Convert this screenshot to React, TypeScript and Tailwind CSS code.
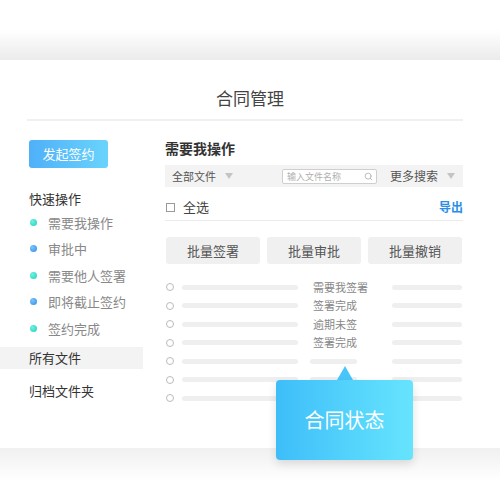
import { Search } from "lucide-react"

const quick = [
  { label: "需要我操作", color: "bg-[radial-gradient(circle_at_35%_35%,#6ff0e2,#21cfbd)]" },
  { label: "审批中", color: "bg-[radial-gradient(circle_at_35%_35%,#7cc3fa,#2f8ee8)]" },
  { label: "需要他人签署", color: "bg-[radial-gradient(circle_at_35%_35%,#6ff0e2,#21cfbd)]" },
  { label: "即将截止签约", color: "bg-[radial-gradient(circle_at_35%_35%,#7cc3fa,#2f8ee8)]" },
  { label: "签约完成", color: "bg-[radial-gradient(circle_at_35%_35%,#6ff0e2,#21cfbd)]" },
]

const rows = ["需要我签署", "签署完成", "逾期未签", "签署完成", "", "", ""]

function Caret() {
  return <span className="ml-[9px] inline-block w-0 h-0 border-l-[4px] border-r-[4px] border-t-[6px] border-l-transparent border-r-transparent border-t-[#c4c4c4]" />
}

export default function App() {
  return (
    <div className="w-[500px] h-[500px] bg-white flex flex-col overflow-hidden font-['Noto_Sans_CJK_SC','Noto_Sans',sans-serif]">
      <div className="h-[30px] shrink-0" />
      <div className="h-[30px] shrink-0 bg-gradient-to-b from-white to-[#ebebeb]" />

      <div className="relative h-[388px] shrink-0 bg-white">
        <div className="h-[59px] flex items-center justify-center pt-[16px] text-[17px] text-[#444]">合同管理</div>
        <div className="ml-[27px] w-[436px] h-[2px] bg-[#f0f0f0]" />

        <div className="flex">
          {/* sidebar */}
          <div className="w-[143px] shrink-0 pt-[19px]">
            <div className="ml-[29px] w-[79px] h-[28px] rounded-[3px] bg-gradient-to-r from-[#4fb0f8] to-[#6ad3fc] flex items-center justify-center text-[13px] text-white">
              发起签约
            </div>
            <div className="ml-[29px] mt-[22px] h-[18px] flex items-center text-[13px] text-[#333]">快速操作</div>
            <div className="mt-[1px]">
              {quick.map((q) => (
                <div key={q.label} className="h-[26.5px] flex items-center pl-[30px]">
                  <span className={`w-[7px] h-[7px] rounded-full ${q.color}`} />
                  <span className="ml-[11px] text-[13px] text-[#888]">{q.label}</span>
                </div>
              ))}
            </div>
            <div className="mt-[5px] h-[22px] bg-[#f3f3f3] flex items-center pl-[29px] text-[13px] text-[#333]">所有文件</div>
            <div className="mt-[11px] h-[22px] flex items-center pl-[29px] text-[13px] text-[#333]">归档文件夹</div>
          </div>

          {/* main */}
          <div className="ml-[22px] w-[298px] pt-[17px]">
            <div className="h-[20px] flex items-center text-[14px] font-bold text-[#333]">需要我操作</div>
            <div className="mt-[7px] h-[22px] bg-[#f3f3f3] flex items-center pl-[7px] text-[12px] text-[#555]">
              <span className="text-[11px]">全部文件</span>
              <Caret />
              <div className="ml-[49px] w-[95px] h-[15px] bg-white border border-[#cfcfcf] rounded-[2px] flex items-center justify-between pl-[4px] pr-[3px]">
                <span className="text-[9px] leading-none text-[#b0b0b0]">输入文件名称</span>
                <Search className="w-[9px] h-[9px] text-[#aaa]" strokeWidth={2} />
              </div>
              <span className="ml-[13px]">更多搜索</span>
              <Caret />
            </div>
            <div className="mt-[10px] h-[20px] flex items-center">
              <span className="ml-[1px] w-[9px] h-[9px] border border-[#999]" />
              <span className="ml-[8px] text-[13px] text-[#444]">全选</span>
              <span className="ml-auto text-[12px] font-bold text-[#2a8ee6]">导出</span>
            </div>
            <div className="mt-[3px] h-[1px] bg-[#ebebeb]" />
            <div className="mt-[16px] flex gap-[7px] pl-[1px]">
              {["批量签署", "批量审批", "批量撤销"].map((b) => (
                <div key={b} className="w-[94px] h-[27px] rounded-[3px] bg-[#f0f0f0] flex items-center justify-center text-[13px] text-[#555]">
                  {b}
                </div>
              ))}
            </div>
            <div className="mt-[14px]">
              {rows.map((r, i) => (
                <div key={i} className="h-[18.5px] flex items-center">
                  <span className="ml-[1px] w-[8px] h-[8px] rounded-full border border-[#bbb]" />
                  <span className="ml-[8px] w-[116px] h-[5px] rounded-full bg-[#efefef]" />
                  <div className="w-[94px] pl-[15px] flex items-center">
                    {r ? (
                      <span className="text-[11px] text-[#888] leading-none">{r}</span>
                    ) : (
                      <span className="-ml-[3px] w-[47px] h-[5px] rounded-full bg-[#efefef]" />
                    )}
                  </div>
                  <span className="w-[70px] h-[5px] rounded-full bg-[#efefef]" />
                </div>
              ))}
            </div>
          </div>
        </div>

        {/* tooltip */}
        <div className="absolute left-[276px] top-[306px] w-[137px]">
          <div className="ml-[61px] w-0 h-0 border-l-[8px] border-r-[8px] border-b-[14px] border-l-transparent border-r-transparent border-b-[#48c6fa]" />
          <div className="h-[80px] rounded-[4px] bg-gradient-to-r from-[#3dbef9] to-[#66e4fd] shadow-[0_4px_10px_rgba(0,0,0,0.12)] flex items-center justify-center text-[20px] text-white">
            合同状态
          </div>
        </div>
      </div>

      <div className="h-[33px] shrink-0 bg-gradient-to-b from-[#f0f0f0] to-white" />
      <div className="flex-1" />
    </div>
  )
}
